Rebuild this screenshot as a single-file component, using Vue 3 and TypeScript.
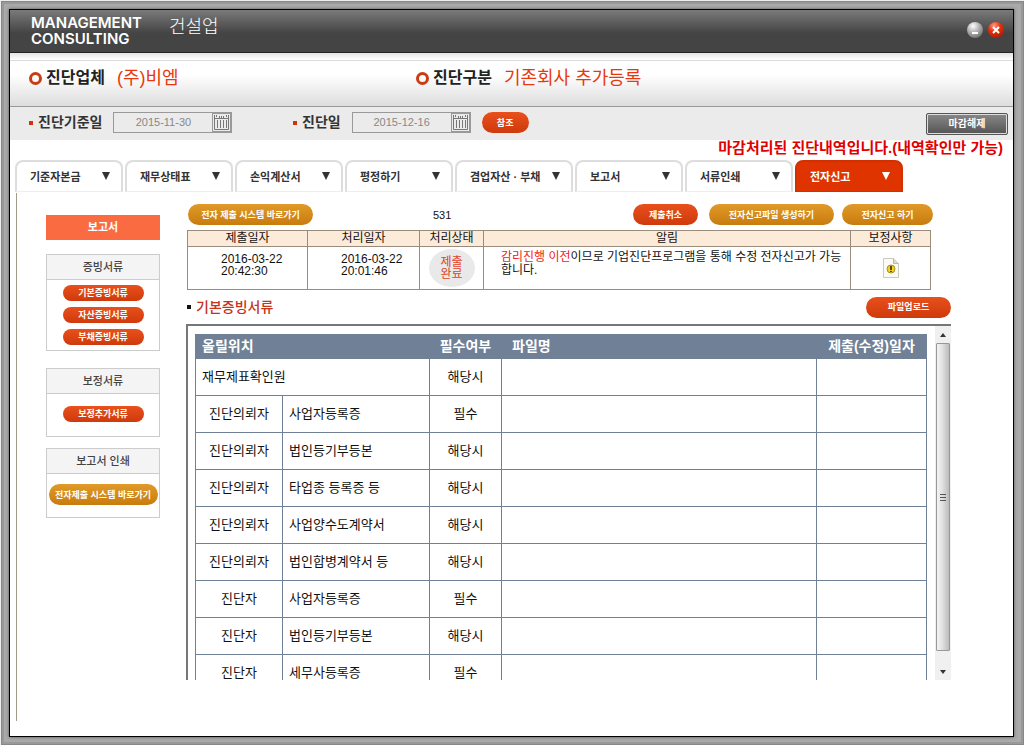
<script setup lang="ts">
import { ref } from 'vue'

interface Tab { label: string; wide?: boolean; active?: boolean }
interface DocRow { owner?: string; name: string; need: string }

const tabs: Tab[] = [
  { label: '기준자본금' },
  { label: '재무상태표' },
  { label: '손익계산서' },
  { label: '평정하기' },
  { label: '겸업자산 · 부채', wide: true },
  { label: '보고서' },
  { label: '서류인쇄' },
  { label: '전자신고', active: true },
]

const evidence: string[] = ['기본증빙서류', '자산증빙서류', '부채증빙서류']

const rows: DocRow[] = [
  { name: '재무제표확인원', need: '해당시' },
  { owner: '진단의뢰자', name: '사업자등록증', need: '필수' },
  { owner: '진단의뢰자', name: '법인등기부등본', need: '해당시' },
  { owner: '진단의뢰자', name: '타업종 등록증 등', need: '해당시' },
  { owner: '진단의뢰자', name: '사업양수도계약서', need: '해당시' },
  { owner: '진단의뢰자', name: '법인합병계약서 등', need: '해당시' },
  { owner: '진단자', name: '사업자등록증', need: '필수' },
  { owner: '진단자', name: '법인등기부등본', need: '해당시' },
  { owner: '진단자', name: '세무사등록증', need: '필수' },
]

const baseDate = ref('2015-11-30')
const checkDate = ref('2015-12-16')
const viewport = ref<HTMLElement | null>(null)

function scroll(amount: number): void {
  viewport.value?.scrollBy({ top: amount })
}
</script>

<template>
  <div class="frame">
    <div class="window">
      <header class="titlebar">
        <div class="logo">MANAGEMENT<br>CONSULTING</div>
        <h1>건설업</h1>
        <div class="winbtns">
          <button type="button" aria-label="최소화">
            <svg width="18" height="18" viewBox="0 0 18 18">
              <defs>
                <radialGradient id="gmin" cx="38%" cy="25%" r="75%">
                  <stop offset="0" stop-color="#fff" /><stop offset=".5" stop-color="#b5b5b5" /><stop offset="1" stop-color="#777" />
                </radialGradient>
              </defs>
              <circle cx="9" cy="9" r="8" fill="url(#gmin)" />
              <path d="M6 12h6" stroke="#fff" stroke-width="2" />
            </svg>
          </button>
          <button type="button" aria-label="닫기">
            <svg width="18" height="18" viewBox="0 0 18 18">
              <defs>
                <radialGradient id="gclose" cx="38%" cy="22%" r="80%">
                  <stop offset="0" stop-color="#ff9a80" /><stop offset=".5" stop-color="#e0300f" /><stop offset="1" stop-color="#b01c00" />
                </radialGradient>
              </defs>
              <circle cx="9" cy="9" r="8" fill="url(#gclose)" />
              <path d="M6 6l6 6M12 6l-6 6" stroke="#fff" stroke-width="2" />
            </svg>
          </button>
        </div>
      </header>

      <div class="strip"></div>

      <section class="company">
        <div class="field"><span class="ring"></span><b>진단업체</b><span class="val">(주)비엠</span></div>
        <div class="field"><span class="ring"></span><b>진단구분</b><span class="val">기존회사 추가등록</span></div>
      </section>

      <section class="dates">
        <div class="datefield first">
          <span class="dot red"></span>
          <label for="base">진단기준일</label>
          <div class="datebox">
            <input id="base" v-model="baseDate" type="text">
            <button type="button" aria-label="진단기준일 달력">
              <svg width="19" height="19" viewBox="0 0 19 19" fill="none" stroke="#777">
                <rect x=".5" y=".5" width="18" height="18" stroke="#999" />
                <path d="M2.500 2v14.500h14V2M2.500 5.500h14" />
                <path d="M4.500 2v2M7.500 3v2M9.500 3v2M11.500 3v2M14.500 2v2M5.500 7v8M8.500 7v8M11.500 7v8M14.500 7v8" />
              </svg>
            </button>
          </div>
        </div>
        <div class="datefield">
          <span class="dot red"></span>
          <label for="check">진단일</label>
          <div class="datebox">
            <input id="check" v-model="checkDate" type="text">
            <button type="button" aria-label="진단일 달력">
              <svg width="19" height="19" viewBox="0 0 19 19" fill="none" stroke="#777">
                <rect x=".5" y=".5" width="18" height="18" stroke="#999" />
                <path d="M2.500 2v14.500h14V2M2.500 5.500h14" />
                <path d="M4.500 2v2M7.500 3v2M9.500 3v2M11.500 3v2M14.500 2v2M5.500 7v8M8.500 7v8M11.500 7v8M14.500 7v8" />
              </svg>
            </button>
          </div>
          <button type="button" class="pill red ref">참조</button>
        </div>
        <button type="button" class="release">마감해제</button>
      </section>

      <p class="notice">마감처리된 진단내역입니다.(내역확인만 가능)</p>

      <nav class="tabs">
        <button
          v-for="t in tabs"
          :key="t.label"
          type="button"
          :class="{ wide: t.wide, active: t.active }"
        >
          {{ t.label }}
          <svg width="8" height="8" viewBox="0 0 8 8"><path d="M0 0h8L4 8z" fill="currentColor" /></svg>
        </button>
      </nav>

      <div class="body">
        <aside class="side">
          <h2 class="side-title">보고서</h2>
          <section class="box evid">
            <h3>증빙서류</h3>
            <button v-for="e in evidence" :key="e" type="button" class="pill red small">{{ e }}</button>
          </section>
          <section class="box fix">
            <h3>보정서류</h3>
            <button type="button" class="pill red small">보정추가서류</button>
          </section>
          <section class="box print">
            <h3>보고서 인쇄</h3>
            <button type="button" class="pill gold">전자제출 시스템 바로가기</button>
          </section>
        </aside>

        <main class="main">
          <div class="toolbar">
            <button type="button" class="pill gold w125">전자 제출 시스템 바로가기</button>
            <span class="num">531</span>
            <button type="button" class="pill red w65">제출취소</button>
            <button type="button" class="pill gold w125">전자신고파일 생성하기</button>
            <button type="button" class="pill gold w91">전자신고 하기</button>
          </div>

          <table class="status">
            <colgroup><col class="s1"><col class="s2"><col class="s3"><col><col class="s5"></colgroup>
            <thead>
              <tr><th>제출일자</th><th>처리일자</th><th>처리상태</th><th>알림</th><th>보정사항</th></tr>
            </thead>
            <tbody>
              <tr>
                <td class="stamp">2016-03-22<br>20:42:30</td>
                <td class="stamp">2016-03-22<br>20:01:46</td>
                <td class="mid"><div class="done">제출<br>완료</div></td>
                <td class="msg"><em>감리진행 이전</em>이므로 기업진단프로그램을 통해 수정 전자신고가 가능<br>합니다.</td>
                <td class="doc">
                  <svg width="18" height="22" viewBox="0 0 18 22">
                    <path d="M1.500 1.500h10l5 5v14h-15z" fill="#fbfbf5" stroke="#c9c9c0" />
                    <path d="M11.500 1.500v5h5" fill="#dcdcd4" stroke="#b9b9ae" />
                    <circle cx="9" cy="12" r="4" fill="#f2cf1f" stroke="#a8932e" />
                    <path d="M9 9v4M9 14v1" stroke="#5a4a08" stroke-width="2" />
                  </svg>
                </td>
              </tr>
            </tbody>
          </table>

          <div class="heading">
            <span class="dot"></span>
            <h2>기본증빙서류</h2>
            <button type="button" class="pill red upload">파일업로드</button>
          </div>

          <div class="scroller">
            <div ref="viewport" class="viewport">
              <table class="docs">
                <colgroup><col class="d1"><col class="d2"><col class="d3"><col><col class="d5"></colgroup>
                <thead>
                  <tr><th colspan="2">올릴위치</th><th class="c">필수여부</th><th class="file">파일명</th><th class="c">제출(수정)일자</th></tr>
                </thead>
                <tbody>
                  <tr v-for="(r, i) in rows" :key="i">
                    <td v-if="r.owner" class="c">{{ r.owner }}</td>
                    <td :colspan="r.owner ? 1 : 2">{{ r.name }}</td>
                    <td class="c">{{ r.need }}</td>
                    <td></td>
                    <td></td>
                  </tr>
                </tbody>
              </table>
            </div>
            <div class="bar">
              <button type="button" aria-label="위로" @click="scroll(-37)">
                <svg width="6" height="4" viewBox="0 0 6 4"><path d="M0 4l3-4 3 4z" fill="#333" /></svg>
              </button>
              <div class="thumb"><i></i><i></i><i></i></div>
              <button type="button" class="down" aria-label="아래로" @click="scroll(37)">
                <svg width="6" height="4" viewBox="0 0 6 4"><path d="M0 0l3 4 3-4z" fill="#333" /></svg>
              </button>
            </div>
          </div>
        </main>
      </div>
    </div>
  </div>
</template>

<style>
body { margin: 0; background: #fff; }
</style>

<style scoped>
* { box-sizing: border-box; }
h1, h2, h3, p { margin: 0; }
button { padding: 0; border: 0; background: none; font-family: inherit; white-space: nowrap; }

.frame {
  height: 100vh;
  min-height: 700px;
  padding: 8px 10px 8px 8px;
  font-family: "Liberation Sans", "Noto Sans CJK KR", sans-serif;
  color: #111;
  background: #aaa;
  border-top: 1px solid #eee;
  border-left: 1px solid #eee;
  box-shadow: inset 0 0 0 1px #888, inset 0 0 0 3px #999;
}
.window {
  display: flex;
  flex-direction: column;
  height: 100%;
  border: 1px solid #000;
  background: #fff;
  box-shadow: 0 0 3px #555;
}

.titlebar {
  display: flex;
  flex: none;
  height: 43px;
  padding: 5px 8px 0 21px;
  background: linear-gradient(#7a7a7a, #444 55%, #444);
  border-bottom: 1px solid #222;
  color: #fff;
}
.logo { width: 138px; font: 600 15px/16px Inter, sans-serif; }
h1 { flex: 1; font-size: 18px; line-height: 20px; font-weight: 300; font-family: "Noto Sans CJK KR", sans-serif; }
.winbtns { display: flex; gap: 3px; padding-top: 6px; }
.winbtns button { height: 18px; }
.winbtns svg { display: block; }

.strip { flex: none; height: 8px; background: linear-gradient(#e4e4e4, #fff); border-bottom: 1px solid #ddd; }

.company {
  display: grid;
  flex: none;
  grid-template-columns: 387px 1fr;
  height: 46px;
  padding: 4px 0 0 19px;
  background: linear-gradient(#fff 30%, #ddd);
  border-bottom: 1px solid #999;
}
.field { display: flex; align-items: center; height: 26px; }
.ring { width: 13px; height: 13px; margin-right: 4px; border: 3px solid #c93c14; border-radius: 50%; }
.field b { font-size: 16px; line-height: 24px; color: #222; }
.val { margin-left: 12px; font-size: 18px; line-height: 24px; color: #e8380d; }

.dates { display: flex; flex: none; height: 33px; padding: 5px 5px 0 19px; background: #ebebeb; }
.datefield { display: flex; align-items: center; height: 21px; }
.first { width: 264px; }
.dot { flex: none; width: 4px; height: 4px; margin-right: 5px; background: #111; }
.dot.red { background: #d2300e; }
label { font-size: 14px; font-weight: 700; line-height: 21px; color: #333; }
.datebox { display: flex; width: 119px; height: 21px; margin-left: 11px; border: 1px solid #999; }
.datebox input {
  flex: 1;
  min-width: 0;
  padding: 0;
  border: 0;
  background: transparent;
  font: 300 11px/19px "Liberation Sans", sans-serif;
  color: #888;
  text-align: center;
}
.datebox button { width: 19px; height: 19px; }
.datebox svg { display: block; }
.ref { width: 47px; margin-left: 11px; }
.release {
  width: 82px;
  height: 22px;
  margin: 1px 0 0 auto;
  border: 1px solid #555;
  border-radius: 2px;
  box-shadow: inset 0 0 0 1px #ddd;
  background: linear-gradient(#888, #555);
  font-size: 10px;
  line-height: 18px;
  font-weight: 700;
  color: #fff;
}

.notice { flex: none; height: 20px; padding-right: 10px; text-align: right; font-size: 15px; line-height: 16px; font-weight: 700; color: #e00000; }

.tabs { display: flex; flex: none; gap: 2px; padding-left: 5px; }
.tabs button {
  display: flex;
  align-items: center;
  justify-content: space-between;
  width: 108px;
  height: 32px;
  padding: 0 11px 1px 13px;
  border: 2px solid #ddd;
  border-bottom: 1px solid #eee;
  border-radius: 8px 8px 0 0;
  background: #fff;
  font-size: 11px;
  font-weight: 700;
  color: #333;
}
.tabs button.wide { width: 118px; }
.tabs button.active { border-color: #d23000; background: #e03400; color: #fff; }

.body { display: flex; flex: 1; min-height: 0; margin: 1px 0 15px 6px; padding: 11px 62px 41px 29px; border-left: 1px solid #a09c8a; }

.pill {
  flex: none;
  height: 21px;
  border-radius: 11px;
  font-size: 9px;
  line-height: 20px;
  font-weight: 700;
  color: #fff;
  text-align: center;
}
.pill.red { background: linear-gradient(#e8501c, #cf3a0c); }
.pill.gold { background: linear-gradient(#e09a28, #c87c0e); }
.pill.small { width: 81px; height: 16px; line-height: 16px; }
.w125 { width: 125px; }
.w65 { width: 65px; }
.w91 { width: 91px; }

.side { flex: none; width: 114px; margin-right: 26px; padding-top: 11px; }
.side-title { height: 25px; background: #fa6b42; color: #fff; font-size: 11px; line-height: 24px; text-align: center; }
.box { display: flex; flex-direction: column; align-items: center; border: 1px solid #ccc; }
.box h3 { width: 100%; height: 25px; border-bottom: 1px solid #ccc; background: #f4f4f4; font-size: 11px; line-height: 24px; font-weight: 500; color: #444; text-align: center; }
.evid { height: 97px; margin-top: 14px; gap: 6px; }
.evid h3 { margin-bottom: -1px; }
.fix { height: 69px; margin-top: 17px; gap: 12px; }
.print { height: 70px; margin-top: 11px; gap: 10px; }
.print .pill { width: 109px; }

.main { display: flex; flex: 1; flex-direction: column; min-width: 0; }
.toolbar { display: flex; flex: none; align-items: center; padding: 0 18px 0 2px; }
.num { flex: 1; padding-left: 120px; font-size: 11px; line-height: 18px; }
.toolbar .w65 { margin-right: 11px; }
.toolbar .w91 { margin-left: 8px; }

table { border-collapse: collapse; table-layout: fixed; }
.status { width: calc(100% - 21px); margin: 5px 0 0 1px; }
.status th, .status td { padding: 0; border: 1px solid #9a8c7c; font-size: 12px; vertical-align: top; }
.status th { height: 16px; background: #fdebd9; font-weight: 400; line-height: 15px; }
.status td { height: 43px; }
.s1 { width: 120px; }
.s2 { width: 112px; }
.s3 { width: 64px; }
.s5 { width: 80px; }
.status .stamp { padding: 6px 0 0 33px; line-height: 12px; }
.status .mid { vertical-align: middle; }
.done { width: 46px; height: 38px; margin: 0 auto; padding-top: 7px; border-radius: 50%; background: #e9e9e9; color: #e0431c; line-height: 12px; text-align: center; }
.status .msg { padding: 4px 0 0 17px; line-height: 13px; white-space: nowrap; }
.msg em { font-style: normal; color: #f01818; }
.status .doc { text-align: center; vertical-align: middle; }
.doc svg { display: block; margin: 0 auto; }

.heading { display: flex; flex: none; align-items: center; height: 22px; margin-top: 6px; padding-left: 1px; }
.heading h2 { flex: 1; font-size: 14px; font-weight: 500; color: #c8321a; line-height: 22px; }
.upload { width: 85px; }

.scroller { display: flex; flex: 1; min-height: 0; margin-top: 6px; border-top: 2px solid #777; border-left: 2px solid #777; }
.viewport { flex: 1; overflow: hidden; padding: 8px 8px 0 7px; }
.docs { width: 100%; }
.docs th, .docs td { border: 1px solid #6f8097; font-size: 13px; text-align: left; }
.docs th { height: 24px; padding: 0 6px 1px; border-color: #708096; background: #708096; color: #fff; font-size: 14px; line-height: 20px; }
.docs td { height: 37px; padding: 0 6px 1px; line-height: 18px; }
.docs th.c, .docs td.c { padding-left: 0; padding-right: 0; text-align: center; }
.docs th.file { padding-left: 10px; }
.d1 { width: 87px; }
.d2 { width: 147px; }
.d3 { width: 72px; }
.d5 { width: 110px; }

.bar { display: flex; flex: none; flex-direction: column; width: 16px; background: #f0f0f0; }
.bar button { display: flex; align-items: center; justify-content: center; width: 16px; height: 17px; }
.thumb {
  display: flex;
  flex: 1;
  flex-direction: column;
  align-items: center;
  justify-content: center;
  gap: 2px;
  margin: 0 1px 12px;
  border: 1px solid #989898;
  border-radius: 1px;
  background: linear-gradient(90deg, #f4f4f4, #e0e0e0 45%, #bbb);
}
.thumb i { width: 6px; height: 1px; background: #555; }
</style>
